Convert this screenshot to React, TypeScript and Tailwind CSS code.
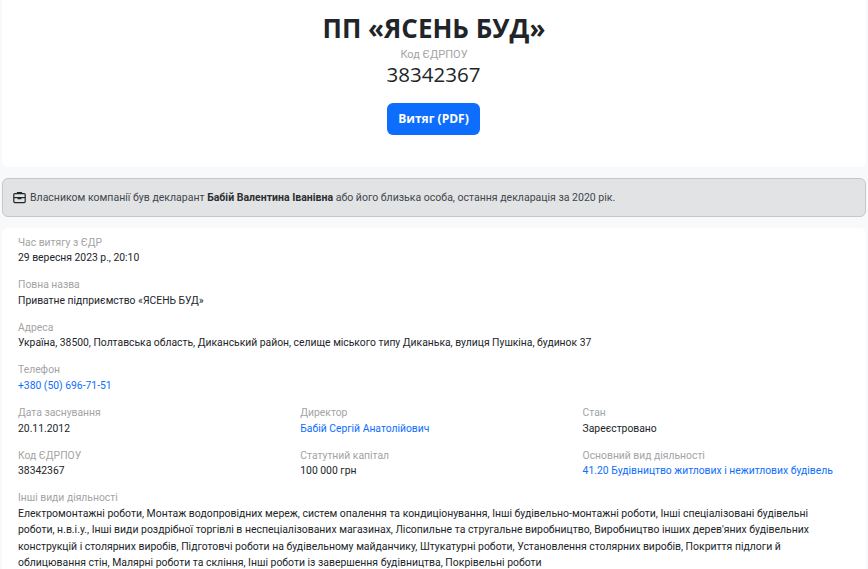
function Field({ label, value, link }: { label: string; value: string; link?: boolean }) {
  return (
    <div>
      <div className="text-[10.35px] leading-[15.5px] text-[#a4a4a4]">{label}</div>
      <div className={`text-[10.35px] leading-[16.5px] ${link ? "text-[#0d6efd]" : "text-[#212529]"}`}>{value}</div>
    </div>
  );
}

export default function App() {
  return (
    <div className="h-[569px] overflow-hidden bg-[#f8f9fa] px-[2px] font-['Roboto','Noto_Sans',sans-serif] text-[#212529]">
      <section className="flex h-[167px] flex-col items-center rounded-b-md bg-white pt-[10px] font-['Open_Sans',sans-serif]">
        <h1 className="text-[26px] leading-[37px] font-bold">ПП «ЯСЕНЬ БУД»</h1>
        <div className="mt-px font-['Roboto',sans-serif] text-[11px] leading-[14px] text-[#a4a4a4]">Код ЄДРПОУ</div>
        <div className="mr-px text-[20.5px] leading-[25px]">38342367</div>
        <button className="mt-[16px] mr-px h-[32px] w-[93px] rounded-md bg-[#0d6efd] text-[12px] font-bold text-white">Витяг (PDF)</button>
      </section>

      <div className="mt-[11px] flex h-[39px] items-center gap-[4px] rounded-md border border-[#c6c7c8] bg-[#e2e3e5] pl-[10px] text-[10.52px] text-[#41464b]">
        <svg width="13" height="13" viewBox="0 0 13 13" fill="none" stroke="#212529" strokeWidth="1.2">
          <path d="M4.5 2.5V1.6h4v.9" />
          <rect x="0.8" y="2.6" width="11.4" height="9" rx="1" />
          <path d="M0.8 6.6h11.4" />
          <path d="M5.2 6v1.6h2.6V6" fill="#212529" />
        </svg>
        <span>
          Власником компанії був декларант <b className="text-[#2b2f32]">Бабій Валентина Іванівна</b> або його близька особа, остання декларація за 2020 рік.
        </span>
      </div>

      <section className="mt-[11px] flex flex-col gap-[10.67px] rounded-t-md bg-white px-[16px] pt-[6.5px]">
        <Field label="Час витягу з ЄДР" value="29 вересня 2023 р., 20:10" />
        <Field label="Повна назва" value="Приватне підприємство «ЯСЕНЬ БУД»" />
        <Field label="Адреса" value="Україна, 38500, Полтавська область, Диканський район, селище міського типу Диканька, вулиця Пушкіна, будинок 37" />
        <Field label="Телефон" value="+380 (50) 696-71-51" link />
        <div className="grid grid-cols-[282.3px_282.3px_1fr] gap-y-[10.67px]">
          <Field label="Дата заснування" value="20.11.2012" />
          <Field label="Директор" value="Бабій Сергій Анатолійович" link />
          <Field label="Стан" value="Зареєстровано" />
          <Field label="Код ЄДРПОУ" value="38342367" />
          <Field label="Статутний капітал" value="100 000 грн" />
          <Field label="Основний вид діяльності" value="41.20 Будівництво житлових і нежитлових будівель" link />
        </div>
        <div>
          <div className="text-[10.35px] leading-[15.5px] text-[#a4a4a4]">Інші види діяльності</div>
          <p className="text-[10.45px] leading-[16.5px]">
            Електромонтажні роботи, Монтаж водопровідних мереж, систем опалення та кондиціонування, Інші будівельно-монтажні роботи, Інші спеціалізовані будівельні
            <br />
            роботи, н.в.і.у., Інші види роздрібної торгівлі в неспеціалізованих магазинах, Лісопильне та стругальне виробництво, Виробництво інших дерев'яних будівельних
            <br />
            конструкцій і столярних виробів, Підготовчі роботи на будівельному майданчику, Штукатурні роботи, Установлення столярних виробів, Покриття підлоги й
            <br />
            облицювання стін, Малярні роботи та скління, Інші роботи із завершення будівництва, Покрівельні роботи
          </p>
        </div>
      </section>
    </div>
  );
}
